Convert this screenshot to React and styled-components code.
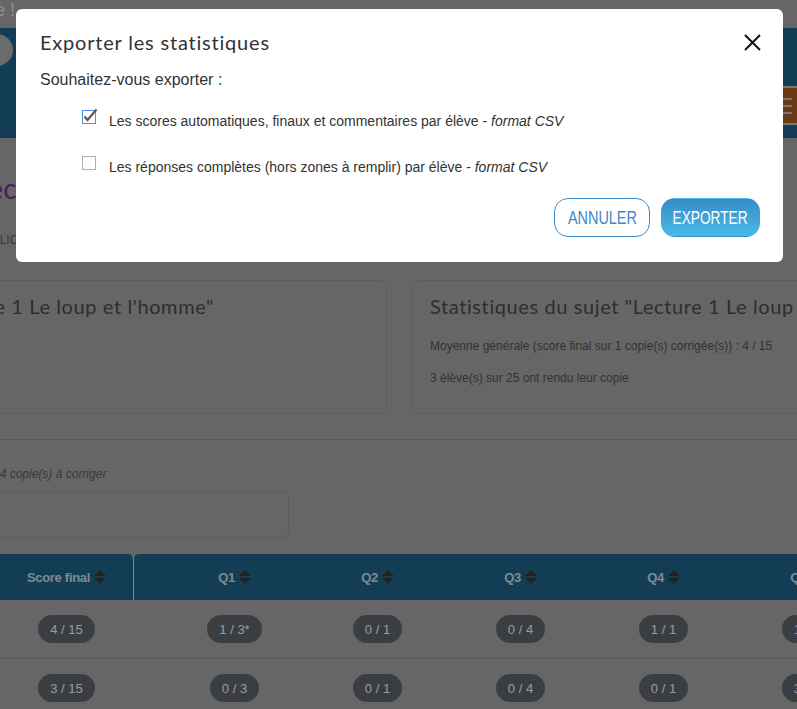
import React from "react";
import styled, { createGlobalStyle } from "styled-components";

const GlobalStyle = createGlobalStyle`
  html, body { margin: 0; padding: 0; background: #aaaaaa; overflow: hidden; }
  body { font-family: "Liberation Sans", Arial, sans-serif; }
  * { box-sizing: border-box; }
`;

/* ---------- background page (scrolled horizontally) ---------- */
const Page = styled.div`
  width: 1000px;
  height: 709px;
  margin-left: -120px;
  overflow: hidden;
`;

const TopStrip = styled.div`
  height: 28px;
  padding-left: 40px;
  font-size: 18px;
  line-height: 20px;
  color: #e8eef4;
`;

const Header = styled.header`
  height: 110px;
  background: #1e678c;
  display: flex;
  justify-content: space-between;
  padding: 0 58px 0 101px;
`;

const Avatar = styled.div`
  width: 32px;
  height: 32px;
  border-radius: 50%;
  background: #b3b3b3;
  align-self: flex-start;
  margin-top: 6px;
`;

const MenuButton = styled.div`
  width: 60px;
  height: 39px;
  align-self: flex-end;
  margin-bottom: 13px;
  background: #b16121;
  border: 2px solid #c8c8c8;
  display: flex;
  flex-direction: column;
  justify-content: center;
  gap: 5px;
  padding-left: 14px;
`;

const MenuLine = styled.span`
  display: block;
  width: 14px;
  height: 2px;
  background: #c6c6c6;
`;

const Heading = styled.h1`
  margin: 33px 0 0;
  padding-left: 95px;
  font-family: Lato, "Noto Sans", sans-serif;
  font-weight: 400;
  font-size: 28px;
  line-height: 34px;
  color: #7b3296;
`;

const Visibility = styled.div`
  margin-top: 27px;
  padding-left: 95px;
  font-size: 12px;
  line-height: 16px;
  text-transform: uppercase;
  color: #616161;
`;

const CardsRow = styled.div`
  display: grid;
  grid-template-columns: 477px 460px;
  gap: 25px;
  margin-top: 32px;
  padding-left: 30px;
`;

const Card = styled.section`
  height: 134px;
  border: 1px solid #9d9d9d;
  border-radius: 6px;
  padding: 13px 17px;
  overflow: hidden;
`;

const CardTitle = styled.h2`
  margin: 0;
  font-family: Lato, "Noto Sans", sans-serif;
  font-weight: 400;
  font-size: 20px;
  line-height: 24px;
  letter-spacing: 0.6px;
  color: #4d4d4d;
  white-space: nowrap;
`;

const CardText = styled.p`
  margin: ${(p) => p.$gap}px 0 0;
  font-size: 12px;
  line-height: 16px;
  color: #555555;
  white-space: nowrap;
`;

const Divider = styled.hr`
  margin: 25px 0 0;
  border: 0;
  height: 1px;
  background: #969696;
`;

const Pending = styled.div`
  margin-top: 26px;
  padding-left: 113px;
  font-size: 12px;
  line-height: 16px;
  font-style: italic;
  color: #616161;
`;

const SearchBox = styled.div`
  margin: 9px 0 0 53px;
  width: 356px;
  height: 47px;
  border: 1px solid #999999;
  border-radius: 6px;
`;

const Table = styled.div`
  margin-top: 16px;
  display: flex;
`;

const FrozenPane = styled.div`
  width: 254px;
  flex: none;
`;

const ScrollPane = styled.div`
  flex: 1;
`;

const HeadRow = styled.div`
  height: 46px;
  background: #1e678c;
  display: grid;
  grid-template-columns: ${(p) => p.$cols};
  padding-left: ${(p) => p.$pad || 0}px;
  border-radius: ${(p) => (p.$frozen ? "0 5px 0 0" : "5px 0 0 0")};
  border-right: ${(p) => (p.$frozen ? "1px solid #e0e0e0" : "0")};
`;

const BodyRow = styled.div`
  height: 59px;
  border-bottom: 1px solid #969696;
  display: grid;
  grid-template-columns: ${(p) => p.$cols};
  padding-left: ${(p) => p.$pad || 0}px;
`;

const HeadCell = styled.div`
  display: flex;
  align-items: center;
  justify-content: center;
  gap: 4px;
  font-weight: 700;
  font-size: 13px;
  letter-spacing: -0.3px;
  color: #d6e4ea;
`;

const Cell = styled.div`
  display: flex;
  align-items: center;
  justify-content: center;
  font-size: 13px;
  color: #4d4d4d;
`;

const Pill = styled.span`
  display: inline-flex;
  align-items: center;
  height: 28px;
  padding: 0 12px;
  border-radius: 14px;
  background: #61666e;
  color: #ffffff;
  font-size: 13px;
  white-space: nowrap;
`;

const SortIcon = () => (
  <svg width="12" height="16" viewBox="0 0 12 16" aria-hidden="true">
    <path d="M0 7 L6 1 L12 7 Z M0 9 L12 9 L6 15 Z" fill="#383838" />
  </svg>
);

/* ---------- modal ---------- */
const Backdrop = styled.div`
  position: fixed;
  inset: 0;
  background: rgba(0, 0, 0, 0.4);
  z-index: 10;
`;

const Dialog = styled.div`
  margin: 9px 0 0 16px;
  width: 767px;
  background: #ffffff;
  border-radius: 6px;
  color: #333333;
`;

const DialogHeader = styled.div`
  display: flex;
  align-items: center;
  justify-content: space-between;
  padding: 20px 22px 0 24px;
`;

const DialogTitle = styled.h3`
  margin: 0;
  font-family: Lato, "Noto Sans", sans-serif;
  font-weight: 400;
  font-size: 20px;
  line-height: 26px;
  letter-spacing: 0.8px;
  color: #333333;
`;

const CloseButton = styled.button`
  width: 17px;
  height: 17px;
  padding: 0;
  border: 0;
  background: none;
  display: flex;
`;

const DialogBody = styled.div`
  padding: 15px 24px 0;
`;

const Question = styled.p`
  margin: 0;
  font-size: 16px;
  line-height: 20px;
`;

const Options = styled.div`
  margin-top: 21px;
  padding-left: 42px;
  display: flex;
  flex-direction: column;
  gap: 26px;
`;

const Option = styled.label`
  display: flex;
  align-items: flex-start;
  gap: 13px;
  font-size: 14px;
  line-height: 20px;
  color: #333333;
`;

const Box = styled.span`
  width: 14px;
  height: 14px;
  margin-top: -1px;
  flex: none;
  border: 1px solid ${(p) => (p.$checked ? "#4d8fe8" : "#b0b0b0")};
  background: #ffffff;
  display: flex;
`;

const Format = styled.em`
  font-style: italic;
`;

const Footer = styled.div`
  display: flex;
  justify-content: flex-end;
  gap: 11px;
  padding: 21px 23px 25px;
`;

const ActionButton = styled.button`
  height: 39px;
  width: ${(p) => p.$w}px;
  border-radius: 14px;
  border: 1px solid ${(p) => (p.$primary ? "transparent" : "#3b8ccb")};
  background: ${(p) =>
    p.$primary ? "linear-gradient(#3a8ac8, #46bbe8)" : "#ffffff"};
  color: ${(p) => (p.$primary ? "#ffffff" : "#3f87c8")};
  font-family: "Liberation Sans", Arial, sans-serif;
  font-size: 19px;
  padding: 0;
  display: flex;
  align-items: center;
  justify-content: center;
`;

const Squeezed = styled.span`
  display: inline-block;
  transform: scaleX(${(p) => p.$k});
`;

const Checkbox = ({ checked }) => (
  <Box $checked={checked}>
    {checked && (
      <svg width="14" height="14" viewBox="0 0 14 14" style={{ overflow: "visible" }} aria-hidden="true">
        <path d="M1.5 5.5 L4.5 9 L13.5 -1.5" fill="none" stroke="#5a5a5a" strokeWidth="2.2" />
      </svg>
    )}
  </Box>
);

const qCols = "repeat(6, 143px)";
const fCols = "120px 133px";

const rows = [
  { name: "Alice M.", total: "4 / 15", q: ["1 / 3*", "0 / 1", "0 / 4", "1 / 1", "1 / 3", "1 / 3"] },
  { name: "Hugo D.", total: "3 / 15", q: ["0 / 3", "0 / 1", "0 / 4", "0 / 1", "3 / 4", "0 / 2"] },
];

export default function App() {
  return (
    <>
      <GlobalStyle />
      <Page>
        <TopStrip>Bienvenue !</TopStrip>
        <Header>
          <Avatar />
          <MenuButton>
            <MenuLine />
            <MenuLine />
            <MenuLine />
          </MenuButton>
        </Header>
        <Heading>Lecture 1 Le loup et l'homme</Heading>
        <Visibility>Public</Visibility>
        <CardsRow>
          <Card>
            <CardTitle>"Lecture 1 Le loup et l'homme"</CardTitle>
          </Card>
          <Card>
            <CardTitle>Statistiques du sujet "Lecture 1 Le loup et l'homme"</CardTitle>
            <CardText $gap={20}>
              Moyenne générale (score final sur 1 copie(s) corrigée(s)) : 4 / 15
            </CardText>
            <CardText $gap={16}>3 élève(s) sur 25 ont rendu leur copie</CardText>
          </Card>
        </CardsRow>
        <Divider />
        <Pending>24 copie(s) à corriger</Pending>
        <SearchBox />
        <Table>
          <FrozenPane>
            <HeadRow $cols={fCols} $frozen>
              <HeadCell>Élève</HeadCell>
              <HeadCell>
                Score final <SortIcon />
              </HeadCell>
            </HeadRow>
            {rows.map((r) => (
              <BodyRow key={r.name} $cols={fCols}>
                <Cell>{r.name}</Cell>
                <Cell>
                  <Pill>{r.total}</Pill>
                </Cell>
              </BodyRow>
            ))}
          </FrozenPane>
          <ScrollPane>
            <HeadRow $cols={qCols} $pad={29}>
              {["Q1", "Q2", "Q3", "Q4", "Q5", "Q6"].map((q) => (
                <HeadCell key={q}>
                  {q}
                  <SortIcon />
                </HeadCell>
              ))}
            </HeadRow>
            {rows.map((r) => (
              <BodyRow key={r.name} $cols={qCols} $pad={29}>
                {r.q.map((v, i) => (
                  <Cell key={i}>
                    <Pill>{v}</Pill>
                  </Cell>
                ))}
              </BodyRow>
            ))}
          </ScrollPane>
        </Table>
      </Page>

      <Backdrop>
        <Dialog role="dialog" aria-modal="true">
          <DialogHeader>
            <DialogTitle>Exporter les statistiques</DialogTitle>
            <CloseButton aria-label="Fermer">
              <svg width="17" height="17" viewBox="0 0 17 17" aria-hidden="true">
                <path d="M1 1 L16 16 M16 1 L1 16" stroke="#111111" strokeWidth="2" />
              </svg>
            </CloseButton>
          </DialogHeader>
          <DialogBody>
            <Question>Souhaitez-vous exporter :</Question>
            <Options>
              <Option>
                <Checkbox checked />
                <span>
                  Les scores automatiques, finaux et commentaires par élève -{" "}
                  <Format>format CSV</Format>
                </span>
              </Option>
              <Option>
                <Checkbox />
                <span>
                  Les réponses complètes (hors zones à remplir) par élève -{" "}
                  <Format>format CSV</Format>
                </span>
              </Option>
            </Options>
          </DialogBody>
          <Footer>
            <ActionButton $w={96}>
              <Squeezed $k={0.76}>ANNULER</Squeezed>
            </ActionButton>
            <ActionButton $w={99} $primary>
              <Squeezed $k={0.72}>EXPORTER</Squeezed>
            </ActionButton>
          </Footer>
        </Dialog>
      </Backdrop>
    </>
  );
}
